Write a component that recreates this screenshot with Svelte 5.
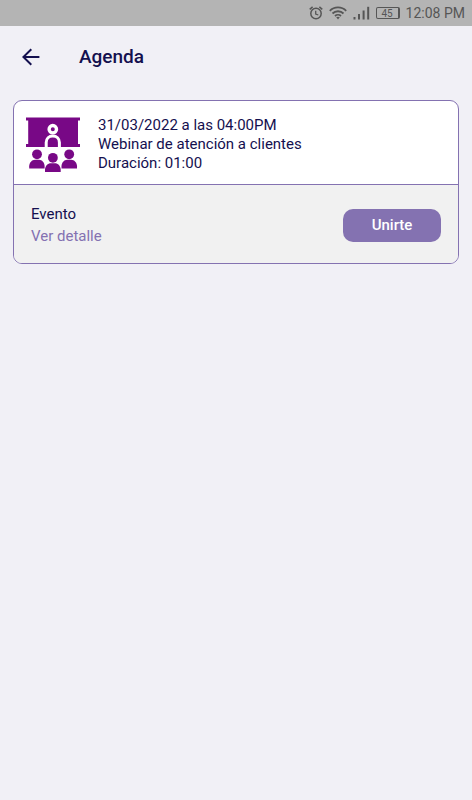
<script>
  const statusTime = '12:08 PM';
  const battery = 45;

  const events = [
    {
      date: '31/03/2022',
      time: '04:00PM',
      title: 'Webinar de atención a clientes',
      duration: '01:00',
      type: 'Evento',
    },
  ];
</script>

<div class="status-bar">
  <svg width="14" height="14" viewBox="0 0 14 14" fill="none">
    <circle cx="7" cy="7.5" r="5.2" stroke="currentColor" stroke-width="1.5" />
    <path d="M6.7 4.7V8L9.3 9" stroke="currentColor" stroke-width="1.3" />
    <path d="M0.7 3.3L3.6 0.9M13.3 3.3L10.4 0.9" stroke="currentColor" stroke-width="1.5" />
  </svg>
  <svg width="18" height="14" viewBox="0 0 18 14" fill="none">
    <path
      d="M0.8 4.8C5.3 0.2 12.7 0.2 17.2 4.8M3.5 7.5C6.5 4.5 11.5 4.5 14.5 7.5M6 10C7.7 8.4 10.3 8.4 12 10"
      stroke="currentColor"
      stroke-width="1.8"
    />
    <path d="M7.2 11.3C8.2 10.5 9.8 10.5 10.8 11.3L9 13.4Z" fill="currentColor" />
  </svg>
  <svg width="17" height="14" viewBox="0 0 17 14" fill="currentColor">
    <rect x="0.5" y="11" width="2" height="2.5" />
    <rect x="5" y="8" width="2" height="5.5" />
    <rect x="9.6" y="4.5" width="2" height="9" />
    <rect x="14.2" y="0.8" width="2" height="12.7" />
  </svg>
  <span class="battery">{battery}</span>
  <time>{statusTime}</time>
</div>

<header>
  <button class="back" type="button" aria-label="Volver">
    <svg width="18" height="18" viewBox="0 0 18 18" fill="none">
      <path d="M17.4 9H1.4M9.3 1.2L1.4 9L9.3 16.8" stroke="currentColor" stroke-width="2" />
    </svg>
  </button>
  <h1>Agenda</h1>
</header>

<main>
  {#each events as event}
    <article class="card">
      <div class="summary">
        <svg width="54" height="56" viewBox="0 0 54 56" fill="none">
          <!-- Screen -->
          <path d="M0 0.5H54V3.5H52V27H54V30H0V27H2.2V3.5H0Z" fill="#780886" />
          <!-- Speaker -->
          <path
            d="M20.2 30V25.5C20.2 21.6 23 18.9 26.8 18.9S33.4 21.6 33.4 25.5V30"
            fill="#780886"
            stroke="#fff"
            stroke-width="3"
          />
          <circle cx="26.8" cy="12.2" r="3.7" stroke="#fff" stroke-width="3.4" />
          <!-- Audience -->
          <g fill="#780886">
            <circle cx="11" cy="37.3" r="4.9" />
            <path d="M3.2 51.5V49.3C3.2 45.5 6 42.7 9 42.7H13C16 42.7 18.6 45.5 18.6 49.3V51.5Z" />
            <circle cx="43.2" cy="37.3" r="4.9" />
            <path d="M35.5 51.5V49.3C35.5 45.5 38.2 42.7 41.2 42.7H45.2C48.2 42.7 51 45.5 51 49.3V51.5Z" />
            <circle cx="26.9" cy="40.8" r="4.9" />
            <path d="M19 54.9V52.7C19 48.9 21.9 46.2 24.9 46.2H28.9C31.9 46.2 34.7 48.9 34.7 52.7V54.9Z" />
          </g>
        </svg>
        <div class="info">
          <p>{event.date} a las {event.time}</p>
          <p>{event.title}</p>
          <p>Duración: {event.duration}</p>
        </div>
      </div>
      <div class="actions">
        <div class="detail">
          <p>{event.type}</p>
          <a href="#detalle">Ver detalle</a>
        </div>
        <button class="join" type="button">Unirte</button>
      </div>
    </article>
  {/each}
</main>

<style>
  :global(body) {
    margin: 0;
    background: #f1f0f6;
    color: #14104f;
    font-family: Roboto, sans-serif;
    font-size: 15px;
  }

  p {
    margin: 0;
  }

  .status-bar {
    display: flex;
    align-items: center;
    justify-content: flex-end;
    gap: 6px;
    height: 26px;
    padding: 0 7px;
    background: #b4b4b4;
    color: #565656;
  }

  .battery {
    box-sizing: border-box;
    width: 24px;
    height: 12px;
    border: 1px solid #565656;
    border-right-width: 2px;
    border-radius: 2px;
    font-size: 10px;
    line-height: 11px;
    text-align: center;
  }

  time {
    font-size: 14px;
    line-height: 26px;
  }

  header {
    display: flex;
    align-items: center;
    gap: 39px;
    height: 62px;
    padding: 0 22px;
  }

  .back {
    display: flex;
    padding: 0;
    border: 0;
    background: none;
    color: #14104f;
    cursor: pointer;
  }

  h1 {
    margin: 0;
    font-size: 19px;
    font-weight: 500;
    line-height: 24px;
  }

  main {
    padding: 12px 13px;
  }

  .card {
    overflow: hidden;
    border: 1px solid #8472b1;
    border-radius: 9px;
    background: #fff;
  }

  .summary {
    display: flex;
    align-items: center;
    gap: 18px;
    padding: 15px 12px 11px;
    border-bottom: 1px solid #8472b1;
  }

  .info {
    line-height: 19px;
  }

  .actions {
    display: flex;
    align-items: center;
    justify-content: space-between;
    padding: 18px 17px 16px;
    background: #f1f1f1;
  }

  .detail {
    line-height: 22px;
  }

  .detail a {
    color: #8472b1;
    text-decoration: none;
  }

  .join {
    width: 98px;
    height: 33px;
    padding: 0;
    border: 0;
    border-radius: 10px;
    background: #8472b1;
    color: #fff;
    font-family: inherit;
    font-size: 15px;
    font-weight: 500;
    cursor: pointer;
  }
</style>
